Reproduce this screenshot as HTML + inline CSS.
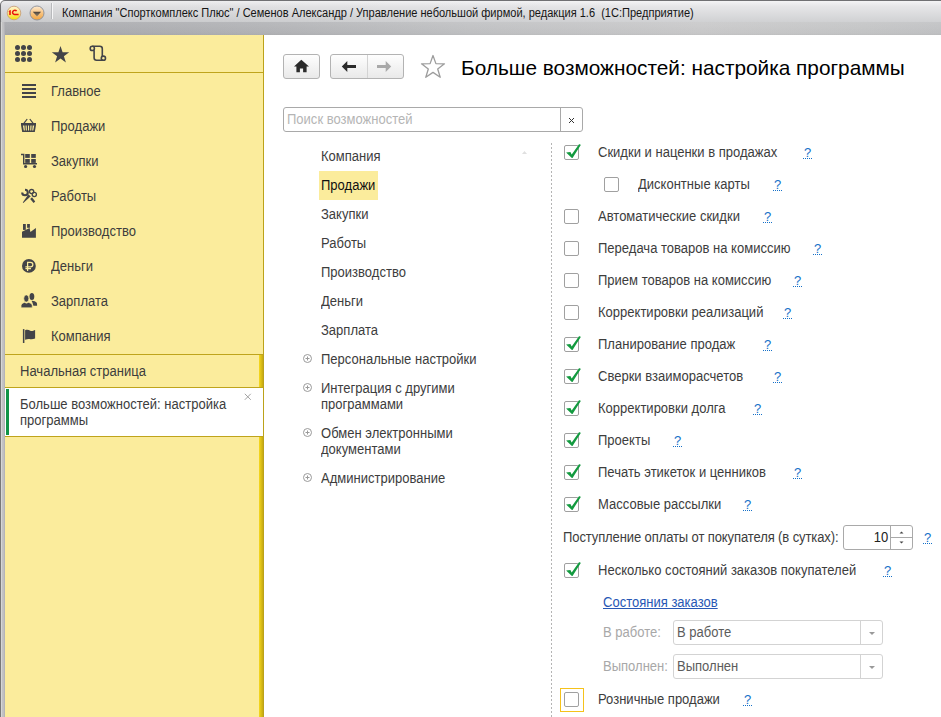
<!DOCTYPE html>
<html><head><meta charset="utf-8">
<style>
*{box-sizing:border-box;margin:0;padding:0}
html,body{width:941px;height:717px;overflow:hidden;background:#fff;font-family:"Liberation Sans",sans-serif;color:#333}
.a{position:absolute}
.t{position:absolute;white-space:nowrap;font-size:14px;line-height:16px;color:#3d3d3d;transform:scaleX(0.93);transform-origin:0 0}
#titlebar{left:0;top:0;width:941px;height:22px;background:linear-gradient(90deg,rgba(0,0,0,0.035),rgba(0,0,0,0) 70%),linear-gradient(#f4f4f5 0,#e6e6e8 25%,#d0d1d3 100%);border-top:1px solid #707073;border-left:1px solid #6e6e70;border-top-left-radius:5px}
#band{left:0;top:22px;width:941px;height:13px;background:linear-gradient(rgba(255,255,255,0.06),rgba(0,0,0,0.02) 85%,rgba(0,0,0,0.05)),linear-gradient(90deg,#a9aaae 0,#b4b5b8 265px,#c2c3c5 470px,#cbcbcc 700px,#c6c7c8 865px,#c3c4c6 941px)}
#frameL{left:0;top:22px;width:5px;height:695px;background:linear-gradient(90deg,#787878 0,#787878 1px,#d6d6d6 1px,#d6d6d6 2px,#c4c4c4 2px,#c0c0c2 3.5px,#aeaeb4 5px)}
#side{left:5px;top:35px;width:259px;height:682px;background:#fbec9c}
.hl{position:absolute;height:1px;background:#bfa41c}
.vbar{position:absolute;left:259px;width:4px;background:linear-gradient(90deg,#f8da1e,#e2c418 40%,#c6aa14)}
.q{position:absolute;font-size:13px;line-height:16px;color:#1570c8;white-space:nowrap;width:10px;padding-left:1px}
.q:after{content:"";position:absolute;left:0;width:10px;top:13px;height:1px;background:repeating-linear-gradient(90deg,#1570c8 0,#1570c8 1px,transparent 1px,transparent 2px)}
.cb{position:absolute;width:15px;height:15px;border:1px solid #a0a0a0;border-radius:2px;background:#fff}
.chk{position:absolute;width:18px;height:18px}
.btn{position:absolute;top:54px;height:25px;border:1px solid #b3b3b3;border-radius:3px;background:linear-gradient(#fefefe,#e9e9e9)}
.lbl{position:absolute;white-space:nowrap;font-size:14px;line-height:16px;color:#a8a8a8;transform:scaleX(0.93);transform-origin:0 0}
.dd{position:absolute;left:673px;width:210px;height:25px;border:1px solid #d3d3d3;border-radius:3px;background:#fff}
.dd .v{position:absolute;left:3px;top:3px;font-size:14px;line-height:16px;color:#5c5c5c;white-space:nowrap;transform:scaleX(0.93);transform-origin:0 0}
.dd .s{position:absolute;left:186px;top:0;width:1px;height:23px;background:#d3d3d3}
.dd .ar{position:absolute;left:194.5px;top:11px;width:0;height:0;border-left:3px solid transparent;border-right:3px solid transparent;border-top:3px solid #999}
</style></head><body>
<div id="titlebar" class="a"></div>
<div id="band" class="a"></div>
<div id="frameL" class="a"></div>

<!-- title bar icons -->
<svg class="a" style="left:0;top:0" width="50" height="24" viewBox="0 0 50 24">
  <defs>
    <linearGradient id="g1" x1="0" y1="0" x2="0" y2="1"><stop offset="0" stop-color="#fff6cc"/><stop offset="0.5" stop-color="#ffe680"/><stop offset="1" stop-color="#f2e400"/></linearGradient>
    <linearGradient id="g2" x1="0" y1="0" x2="0" y2="1"><stop offset="0" stop-color="#fdebd2"/><stop offset="0.45" stop-color="#f8c78a"/><stop offset="1" stop-color="#f2a43c"/></linearGradient>
    <linearGradient id="g3" x1="0" y1="0" x2="0" y2="1"><stop offset="0" stop-color="#4a4038"/><stop offset="1" stop-color="#9a8a70"/></linearGradient>
  </defs>
  <circle cx="14" cy="13" r="6.8" fill="url(#g1)" stroke="#c9a27e" stroke-width="0.9"/>
  <path d="M9.2 10.6 L10.8 10 V15.1 H9.2 Z M8.4 11.6 L9.6 10.4 V12 Z" fill="#e8140c"/>
  <path d="M16.6 11.2 A2.2 2.2 0 1 0 14.6 14.6 H18.6" fill="none" stroke="#e8140c" stroke-width="1.5"/>
  <circle cx="37" cy="13" r="7" fill="url(#g2)" stroke="#8a8e9a" stroke-width="0.9"/>
  <path d="M32.8 11.8 L41.1 11.8 L37 16.6 Z" fill="url(#g3)"/>
</svg>
<div class="a" style="left:51px;top:3px;width:1px;height:16px;background:#b8b9bc"></div>
<div class="a" style="left:52px;top:3px;width:1px;height:16px;background:#f6f6f7"></div>
<div class="t" style="transform:scaleX(0.92);left:62px;top:6px;font-size:12px;letter-spacing:0;word-spacing:0;line-height:14px;color:#151515">Компания "Спорткомплекс Плюс" / Семенов Александр / Управление небольшой фирмой, редакция 1.6&nbsp; (1С:Предприятие)</div>

<!-- sidebar -->
<div id="side" class="a"></div>
<div class="a" style="left:263px;top:35px;width:1px;height:682px;background:#bca21a"></div>
<div class="hl" style="left:5px;top:72px;width:258px"></div>
<div class="hl" style="left:5px;top:354px;width:258px"></div>
<div class="vbar" style="top:355px;height:32px"></div>
<div class="hl" style="left:5px;top:387px;width:258px"></div>
<div class="a" style="left:5px;top:388px;width:258px;height:48px;background:#fff"></div>
<div class="a" style="left:6px;top:389px;width:3px;height:46px;background:#109446"></div>
<div class="hl" style="left:5px;top:436px;width:258px"></div>
<div class="vbar" style="top:437px;height:280px"></div>

<svg class="a" style="left:0;top:35px" width="263" height="320" viewBox="0 35 263 320" fill="#434448">
  <!-- grid -->
  <g>
    <circle cx="17.5" cy="47.5" r="2.5"/><circle cx="23.5" cy="47.5" r="2.5"/><circle cx="29.5" cy="47.5" r="2.5"/>
    <circle cx="17.5" cy="53.5" r="2.5"/><circle cx="23.5" cy="53.5" r="2.5"/><circle cx="29.5" cy="53.5" r="2.5"/>
    <circle cx="17.5" cy="59.5" r="2.5"/><circle cx="23.5" cy="59.5" r="2.5"/><circle cx="29.5" cy="59.5" r="2.5"/>
  </g>
  <!-- star -->
  <path d="M60.5 46 L62.6 52.3 L69.2 52.3 L63.9 56.2 L65.9 62.5 L60.5 58.6 L55.1 62.5 L57.1 56.2 L51.8 52.3 L58.4 52.3 Z"/>
  <!-- scroll -->
  <g fill="none" stroke="#434448" stroke-width="1.6">
    <circle cx="92.3" cy="48.4" r="2.1"/>
    <path d="M92.3 46.3 H99.8 Q102.3 46.3 102.3 48.8 V56.3"/>
    <path d="M94.1 50.3 V57.8 Q94.1 60.3 96.6 60.3 H103.4"/>
    <circle cx="103.4" cy="58.2" r="2.1"/>
  </g>
  <!-- hamburger -->
  <rect x="22" y="84" width="14" height="2"/><rect x="22" y="88" width="14" height="2"/><rect x="22" y="92" width="14" height="2"/><rect x="22" y="96" width="14" height="2"/>
  <!-- basket -->
  <path d="M21 123 H36 V125 L34.8 132 H22.2 L21 125 Z M22.9 125.4 L23.8 130.6 H24.9 L24.4 125.4 Z M25.5 125.4 L25.8 130.6 H26.9 L26.7 125.4 Z M28 125.4 V130.6 H29.1 V125.4 Z M30.4 125.4 L30.2 130.6 H31.3 L31.6 125.4 Z M32.7 125.4 L32.2 130.6 H33.3 L34.2 125.4 Z" fill-rule="evenodd"/>
  <path d="M24 123.2 L27.2 119" stroke="#434448" stroke-width="1.2" fill="none"/>
  <path d="M33 123.2 L29.8 119" stroke="#434448" stroke-width="1.2" fill="none"/>
  <!-- cart -->
  <path d="M21 154.5 H23.7 V163.8 H37" fill="none" stroke="#434448" stroke-width="1.4"/>
  <rect x="25.2" y="154" width="4.6" height="3.9"/><rect x="31.2" y="154" width="4.6" height="3.9"/>
  <rect x="25.2" y="159" width="4.6" height="3.9"/><rect x="31.2" y="159" width="4.6" height="3.9"/>
  <circle cx="25.6" cy="166.5" r="1.6"/><circle cx="34.5" cy="166.5" r="1.6"/>
  <!-- tools -->
  <path d="M25 189.7 A2.8 2.8 0 1 1 22.2 192.5" fill="none" stroke="#434448" stroke-width="2.1"/>
  <path d="M28.3 194.4 L30.8 196.2 L23.3 203 L22.8 202.6 Z"/>
  <path d="M30.2 198.9 L32 197.3 L35.2 201.4 L33.6 203 Z"/>
  <g fill="none" stroke="#434448" stroke-width="1.3"><circle cx="31.6" cy="191.6" r="2.1"/><circle cx="34.3" cy="194.5" r="2.1"/></g>
  <!-- factory -->
  <rect x="23" y="224" width="2.8" height="5.9"/><rect x="27.1" y="224" width="2.8" height="3.8"/>
  <path d="M22 231.8 L29.6 228.1 L30.4 232 L35.9 228.1 V237.8 H22 Z"/>
  <!-- ruble -->
  <circle cx="28.9" cy="265.9" r="6.9"/>
  <path d="M27.6 271 V262.3 H30.6 A2.25 2.25 0 0 1 30.6 266.8 H25.4 M25.4 268.6 H31" fill="none" stroke="#fbec9c" stroke-width="1.25"/>
  <!-- people -->
  <ellipse cx="31.9" cy="296.6" rx="2.4" ry="3.5"/>
  <path d="M31.5 300.8 Q35 300.6 36.6 302.6 Q37.2 303.6 37.1 305.8 H33.4 L32.4 302.4 Z"/>
  <ellipse cx="26.3" cy="298.5" rx="2.5" ry="3.6" stroke="#fbec9c" stroke-width="0.6"/>
  <path d="M21.1 307.8 V305.2 Q21.3 303.3 24.3 302.4 L26.5 303.2 L28.6 302.4 Q32.1 303.3 32.2 305.2 V307.8 Z" stroke="#fbec9c" stroke-width="0.6"/>
  <!-- flag -->
  <rect x="22.9" y="329.1" width="1.5" height="13.9"/>
  <path d="M25.1 330.3 C27 329.4 28.8 330 30.3 330.8 C32 331.6 33.5 330.4 35.1 329.9 V338.4 C33.5 338.9 32 339.6 30.3 339.2 C28.8 338.8 27 339 25.1 339.7 Z"/>
</svg>

<div class="t" style="left:51px;top:83px">Главное</div>
<div class="t" style="left:51px;top:118px">Продажи</div>
<div class="t" style="left:51px;top:153px">Закупки</div>
<div class="t" style="left:51px;top:188px">Работы</div>
<div class="t" style="left:51px;top:223px">Производство</div>
<div class="t" style="left:51px;top:258px">Деньги</div>
<div class="t" style="left:51px;top:293px">Зарплата</div>
<div class="t" style="left:51px;top:328px">Компания</div>
<div class="t" style="left:20px;top:363px">Начальная страница</div>
<div class="t" style="left:20px;top:396px">Больше возможностей: настройка</div>
<div class="t" style="left:20px;top:412px">программы</div>
<svg class="a" style="left:244px;top:393px" width="8" height="8"><path d="M0.8 0.8 L6.8 6.8 M6.8 0.8 L0.8 6.8" stroke="#999" stroke-width="0.9"/></svg>

<!-- toolbar -->
<div class="btn" style="left:283px;width:37px"></div>
<svg class="a" style="left:293px;top:59px" width="17" height="14" viewBox="0 0 17 14"><path d="M8.3 0.8 L16 7.5 L13.6 7.5 L13.6 13.2 L10.1 13.2 L10.1 9.4 L6.9 9.4 L6.9 13.2 L3.4 13.2 L3.4 7.5 L1 7.5 Z" fill="#2b2b2b"/></svg>
<div class="btn" style="left:330px;width:74px"></div>
<div class="a" style="left:367px;top:55px;width:1px;height:23px;background:#d3d3d3"></div>
<svg class="a" style="left:341px;top:60px" width="16" height="13" viewBox="0 0 16 13"><path d="M0.8 6.5 L6.3 1 L6.3 4.9 L15 4.9 L15 8.1 L6.3 8.1 L6.3 12 Z" fill="#2b2b2b"/></svg>
<svg class="a" style="left:376px;top:60px" width="16" height="13" viewBox="0 0 16 13"><path d="M15.2 6.5 L9.7 1 L9.7 4.9 L1 4.9 L1 8.1 L9.7 8.1 L9.7 12 Z" fill="#a9a9a9"/></svg>
<svg class="a" style="left:420px;top:54px" width="26" height="25" viewBox="0 0 26 25"><path d="M13 1.5 L15.9 9.6 L24.5 9.8 L17.7 15 L20.2 23.3 L13 18.4 L5.8 23.3 L8.3 15 L1.5 9.8 L10.1 9.6 Z" fill="none" stroke="#9d9d9d" stroke-width="1.3" stroke-linejoin="round"/></svg>
<div class="t" style="transform:none;left:461px;top:56px;font-size:20.8px;line-height:24px;color:#000">Больше возможностей: настройка программы</div>

<!-- search -->
<div class="a" style="left:283px;top:107px;width:300px;height:25px;border:1px solid #a9a9a9;border-radius:3px;background:#fff"></div>
<div class="a" style="left:560px;top:108px;width:1px;height:23px;background:#a9a9a9"></div>
<div class="t" style="left:287px;top:111px;color:#b5b5b5">Поиск возможностей</div>
<svg class="a" style="left:568px;top:117px" width="7" height="7"><path d="M1 1 L6 6 M6 1 L1 6" stroke="#333" stroke-width="1"/></svg>

<!-- left list -->
<div class="a" style="left:319px;top:171px;width:59px;height:29px;background:#fbec9c"></div>
<svg class="a" style="left:520px;top:149px" width="9" height="7"><path d="M2 5 L4.5 2 L7 5 Z" fill="#e0e0e0"/></svg>
<div class="t" style="left:321px;top:148px">Компания</div>
<div class="t" style="left:321px;top:177px;color:#111">Продажи</div>
<div class="t" style="left:321px;top:206px">Закупки</div>
<div class="t" style="left:321px;top:235px">Работы</div>
<div class="t" style="left:321px;top:264px">Производство</div>
<div class="t" style="left:321px;top:293px">Деньги</div>
<div class="t" style="left:321px;top:322px">Зарплата</div>
<div class="t" style="left:321px;top:351px">Персональные настройки</div>
<div class="t" style="left:321px;top:380px">Интеграция с другими</div>
<div class="t" style="left:321px;top:396px">программами</div>
<div class="t" style="left:321px;top:425px">Обмен электронными</div>
<div class="t" style="left:321px;top:441px">документами</div>
<div class="t" style="left:321px;top:470px">Администрирование</div>
<svg class="a" style="left:302px;top:353px" width="11" height="130" viewBox="0 0 11 130">
  <g fill="none" stroke="#9a9a9a" stroke-width="1">
    <circle cx="5.5" cy="5.5" r="4"/><path d="M3.5 5.5 H7.5 M5.5 3.5 V7.5"/>
    <circle cx="5.5" cy="34.5" r="4"/><path d="M3.5 34.5 H7.5 M5.5 32.5 V36.5"/>
    <circle cx="5.5" cy="79.5" r="4"/><path d="M3.5 79.5 H7.5 M5.5 77.5 V81.5"/>
    <circle cx="5.5" cy="124.5" r="4"/><path d="M3.5 124.5 H7.5 M5.5 122.5 V126.5"/>
  </g>
</svg>

<!-- dotted divider -->
<div class="a" style="left:551px;top:143px;width:1px;height:574px;background:repeating-linear-gradient(#b4b4b4 0,#b4b4b4 2px,transparent 2px,transparent 4px)"></div>

<!-- right column -->
<div id="rc"></div>
<div class="cb" style="left:564px;top:145px"></div>
<svg class="chk" style="left:564px;top:144px" width="18" height="18" viewBox="0 0 18 18"><path d="M2.1 8.4 L6.4 8.1 L7.7 10.5 L15 0.3 Q16.1 -0.2 16.8 1.1 L8.7 13.7 Q8.1 14.3 7.6 13.7 Z" fill="#139a3f"/></svg>
<div class="t" style="left:598px;top:144px">Скидки и наценки в продажах</div>
<div class="q" style="left:803px;top:145px">?</div>
<div class="cb" style="left:604px;top:177px"></div>
<div class="t" style="left:638px;top:176px">Дисконтные карты</div>
<div class="q" style="left:773px;top:177px">?</div>
<div class="cb" style="left:564px;top:209px"></div>
<div class="t" style="left:598px;top:208px">Автоматические скидки</div>
<div class="q" style="left:763px;top:209px">?</div>
<div class="cb" style="left:564px;top:241px"></div>
<div class="t" style="left:598px;top:240px">Передача товаров на комиссию</div>
<div class="q" style="left:813px;top:241px">?</div>
<div class="cb" style="left:564px;top:273px"></div>
<div class="t" style="left:598px;top:272px">Прием товаров на комиссию</div>
<div class="q" style="left:793px;top:273px">?</div>
<div class="cb" style="left:564px;top:305px"></div>
<div class="t" style="left:598px;top:304px">Корректировки реализаций</div>
<div class="q" style="left:783px;top:305px">?</div>
<div class="cb" style="left:564px;top:337px"></div>
<svg class="chk" style="left:564px;top:336px" width="18" height="18" viewBox="0 0 18 18"><path d="M2.1 8.4 L6.4 8.1 L7.7 10.5 L15 0.3 Q16.1 -0.2 16.8 1.1 L8.7 13.7 Q8.1 14.3 7.6 13.7 Z" fill="#139a3f"/></svg>
<div class="t" style="left:598px;top:336px">Планирование продаж</div>
<div class="q" style="left:763px;top:337px">?</div>
<div class="cb" style="left:564px;top:369px"></div>
<svg class="chk" style="left:564px;top:368px" width="18" height="18" viewBox="0 0 18 18"><path d="M2.1 8.4 L6.4 8.1 L7.7 10.5 L15 0.3 Q16.1 -0.2 16.8 1.1 L8.7 13.7 Q8.1 14.3 7.6 13.7 Z" fill="#139a3f"/></svg>
<div class="t" style="left:598px;top:368px">Сверки взаиморасчетов</div>
<div class="q" style="left:773px;top:369px">?</div>
<div class="cb" style="left:564px;top:401px"></div>
<svg class="chk" style="left:564px;top:400px" width="18" height="18" viewBox="0 0 18 18"><path d="M2.1 8.4 L6.4 8.1 L7.7 10.5 L15 0.3 Q16.1 -0.2 16.8 1.1 L8.7 13.7 Q8.1 14.3 7.6 13.7 Z" fill="#139a3f"/></svg>
<div class="t" style="left:598px;top:400px">Корректировки долга</div>
<div class="q" style="left:753px;top:401px">?</div>
<div class="cb" style="left:564px;top:433px"></div>
<svg class="chk" style="left:564px;top:432px" width="18" height="18" viewBox="0 0 18 18"><path d="M2.1 8.4 L6.4 8.1 L7.7 10.5 L15 0.3 Q16.1 -0.2 16.8 1.1 L8.7 13.7 Q8.1 14.3 7.6 13.7 Z" fill="#139a3f"/></svg>
<div class="t" style="left:598px;top:432px">Проекты</div>
<div class="q" style="left:673px;top:433px">?</div>
<div class="cb" style="left:564px;top:465px"></div>
<svg class="chk" style="left:564px;top:464px" width="18" height="18" viewBox="0 0 18 18"><path d="M2.1 8.4 L6.4 8.1 L7.7 10.5 L15 0.3 Q16.1 -0.2 16.8 1.1 L8.7 13.7 Q8.1 14.3 7.6 13.7 Z" fill="#139a3f"/></svg>
<div class="t" style="left:598px;top:464px">Печать этикеток и ценников</div>
<div class="q" style="left:793px;top:465px">?</div>
<div class="cb" style="left:564px;top:497px"></div>
<svg class="chk" style="left:564px;top:496px" width="18" height="18" viewBox="0 0 18 18"><path d="M2.1 8.4 L6.4 8.1 L7.7 10.5 L15 0.3 Q16.1 -0.2 16.8 1.1 L8.7 13.7 Q8.1 14.3 7.6 13.7 Z" fill="#139a3f"/></svg>
<div class="t" style="left:598px;top:496px">Массовые рассылки</div>
<div class="q" style="left:743px;top:497px">?</div>
<div class="cb" style="left:564px;top:563px"></div>
<svg class="chk" style="left:564px;top:562px" width="18" height="18" viewBox="0 0 18 18"><path d="M2.1 8.4 L6.4 8.1 L7.7 10.5 L15 0.3 Q16.1 -0.2 16.8 1.1 L8.7 13.7 Q8.1 14.3 7.6 13.7 Z" fill="#139a3f"/></svg>
<div class="t" style="left:598px;top:562px">Несколько состояний заказов покупателей</div>
<div class="q" style="left:883px;top:563px">?</div>
<div class="t" style="left:563px;top:529px;letter-spacing:-0.12px">Поступление оплаты от покупателя (в сутках):</div>
<div class="a" style="left:843px;top:525px;width:70px;height:25px;border:1px solid #a9a9a9;border-radius:3px;background:#fff"></div>
<div class="a" style="left:890px;top:526px;width:1px;height:23px;background:#a9a9a9"></div>
<div class="a" style="left:891px;top:537px;width:21px;height:1px;background:#a9a9a9"></div>
<div class="t" style="left:865px;top:529px;width:25px;text-align:right;color:#222">10</div>
<svg class="a" style="left:898px;top:530px" width="7" height="16"><path d="M1.5 3.5 L3.5 1.5 L5.5 3.5 Z M1.5 11.5 L3.5 13.5 L5.5 11.5 Z" fill="#444"/></svg>
<div class="q" style="left:923px;top:530px">?</div>
<div class="t" style="left:603px;top:594px;color:#2857b5;text-decoration:underline">Состояния заказов</div>
<div class="lbl" style="left:603px;top:624px">В работе:</div>
<div class="dd" style="top:620px"><div class="v">В работе</div><div class="s"></div><div class="ar"></div></div>
<div class="lbl" style="left:603px;top:658px">Выполнен:</div>
<div class="dd" style="top:654px"><div class="v">Выполнен</div><div class="s"></div><div class="ar"></div></div>
<div class="a" style="left:560px;top:688px;width:24px;height:24px;border:1px solid #f5c21b"></div>
<div class="cb" style="left:564px;top:692px"></div>
<div class="t" style="left:598px;top:691px">Розничные продажи</div>
<div class="q" style="left:743px;top:692px">?</div>
<!--/rc-->
</body></html>
